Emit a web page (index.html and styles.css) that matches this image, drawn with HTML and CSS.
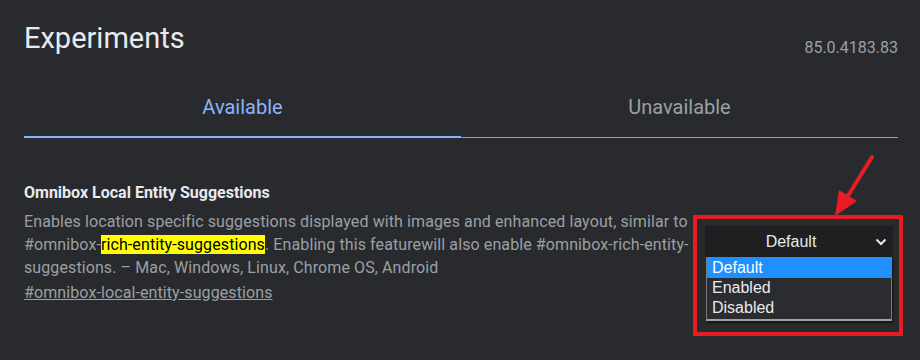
FILE: index.html
```html
<!doctype html>
<html lang="en">
<head>
  <meta charset="utf-8">
  <title>Experiments</title>
  <link rel="stylesheet" href="styles.css">
</head>
<body>
  <header class="page-header">
    <h1 class="title">Experiments</h1>
    <div class="version">85.0.4183.83</div>
  </header>

  <div class="tabs">
    <div class="tab active">Available</div>
    <div class="tab">Unavailable</div>
  </div>

  <div class="experiment">
    <div class="experiment-text">
      <h3 class="experiment-name">Omnibox Local Entity Suggestions</h3>
      <p class="experiment-desc">Enables location specific suggestions displayed with images and enhanced layout, similar to #omnibox-<mark class="hit">rich-entity-suggestions</mark>. Enabling this featurewill also enable #omnibox-rich-entity-suggestions. – Mac, Windows, Linux, Chrome OS, Android</p>
      <a class="permalink" href="#omnibox-local-entity-suggestions">#omnibox-local-entity-suggestions</a>
    </div>
    <div class="experiment-actions">
      <div class="select">
        <span class="select-value">Default</span>
        <svg class="chevron" width="12" height="8" viewBox="0 0 12 8"><path d="M1.5 1.5 L6 6 L10.5 1.5" fill="none" stroke="#e8eaed" stroke-width="2"/></svg>
      </div>
      <ul class="options">
        <li class="option selected">Default</li>
        <li class="option">Enabled</li>
        <li class="option">Disabled</li>
      </ul>
    </div>
  </div>

  <!-- annotation arrow -->
  <svg class="arrow" width="70" height="80" viewBox="820 145 70 80">
    <line x1="872" y1="157" x2="846" y2="199" stroke="#e81c24" stroke-width="4" stroke-linecap="round"/>
    <polygon points="835,216 839,190 857,201" fill="#e81c24"/>
  </svg>
</body>
</html>
```

FILE: styles.css
```css
:root {
  --bg: #292a2d;
  --text: #e8eaed;
  --muted: #9aa0a6;
  --blue: #8ab4f8;
  --mark: #e81c24;
}
body {
  margin: 0;
  padding: 0 22px 0 24px;
  background: var(--bg);
  color: var(--text);
  font-family: Roboto, "Noto Sans", sans-serif;
  position: relative;
  height: 360px;
  overflow: hidden;
}
.page-header {
  display: flex;
  justify-content: space-between;
  align-items: flex-start;
  padding-top: 22px;
}
.title {
  margin: 0;
  font-size: 29px;
  font-weight: 400;
  line-height: 32px;
  color: var(--text);
}
.version {
  margin-top: 16px;
  font-size: 16px;
  line-height: 20px;
  color: var(--muted);
}
.tabs {
  display: flex;
  margin-top: 20px;
  border-bottom: 1px solid var(--muted);
}
.tab {
  flex: 1;
  text-align: center;
  font-size: 20px;
  line-height: 24px;
  padding: 17px 0 17px;
  color: var(--muted);
  border-bottom: 2px solid transparent;
  margin-bottom: -1px;
}
.tab.active {
  color: var(--blue);
  border-bottom-color: var(--blue);
}
.experiment {
  display: flex;
  align-items: flex-start;
  margin-top: 44px;
}
.experiment-text {
  flex: 1;
}
.experiment-name {
  margin: 0;
  font-size: 16px;
  font-weight: 700;
  line-height: 21px;
  color: var(--text);
}
.experiment-desc {
  margin: 7px 0 0;
  font-size: 16px;
  line-height: 23px;
  letter-spacing: 0.1px;
  color: var(--muted);
}
.hit {
  background: #ffff00;
  color: #000;
}
.permalink {
  display: inline-block;
  margin-top: 2px;
  font-size: 16px;
  line-height: 23px;
  letter-spacing: 0.1px;
  color: var(--muted);
  text-decoration: underline;
}
.experiment-actions {
  width: 210px;
  box-sizing: border-box;
  margin: 33px -5px 0 0;
  border: 4px solid var(--mark);
  padding: 7px 6px 11px 8px;
}
.select {
  display: flex;
  align-items: center;
  height: 31px;
  background: #1f1f21;
  font-family: "Liberation Sans", Arial, sans-serif;
  font-size: 16px;
  color: var(--text);
}
.select-value {
  flex: 1;
  text-align: center;
  padding-left: 2px;
}
.chevron {
  margin: 1px 6px 0 0;
}
.options {
  list-style: none;
  margin: 0 1px;
  padding: 0 0 1px;
  border: 1px solid #7a7a7a;
  border-bottom: 2px solid #a3a3a3;
  background: #2b2c2f;
  box-shadow: 1px 2px 2px rgba(0, 0, 0, 0.5);
  font-family: "Liberation Sans", Arial, sans-serif;
  font-size: 16px;
}
.option {
  height: 20px;
  line-height: 20px;
  padding-left: 5px;
  color: var(--text);
}
.option.selected {
  background: #1e90ff;
  color: #fff;
}
.arrow {
  position: absolute;
  left: 820px;
  top: 145px;
}
```
